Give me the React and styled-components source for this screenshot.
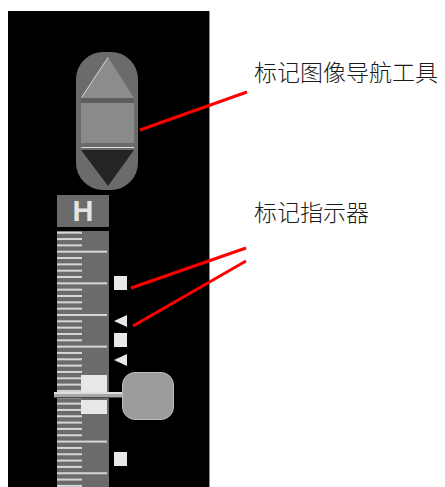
import React from 'react';
import styled, { createGlobalStyle } from 'styled-components';

const GlobalStyle = createGlobalStyle`
  html, body {
    margin: 0;
    padding: 0;
    background: #ffffff;
    overflow: hidden;
  }
`;

const TICK_STEP = 6.33;
const TICK_COUNT = 42;

const markers = [
  { kind: 'square', top: 45 },
  { kind: 'arrow', top: 84 },
  { kind: 'square', top: 102 },
  { kind: 'arrow', top: 123 },
  { kind: 'square', top: 221 },
];

function Ticks() {
  const ticks = [];
  for (let i = 0; i < TICK_COUNT; i++) {
    const long = i % 5 === 3;
    ticks.push(
      <rect key={i} x="0" y={0.7 + i * TICK_STEP} width={long ? 50 : 25} height="2" fill="#d6d6d6" />
    );
  }
  return (
    <svg width="52" height="270" viewBox="0 0 52 270">
      {ticks}
    </svg>
  );
}

function App() {
  return (
    <Page>
      <GlobalStyle />
      <Panel>
        <Navigator>
          <UpArrow width="53" height="41" viewBox="0 0 53 41">
            <polygon points="0,41 27,0 53,41" fill="#8c8c8c" />
            <line x1="0.5" y1="40.5" x2="27" y2="0.5" stroke="#d8d8d8" strokeWidth="1" />
          </UpArrow>
          <Divider />
          <CenterBox />
          <HighlightLine />
          <DownArrow width="53" height="36" viewBox="0 0 53 36">
            <polygon points="0,0 53,0 27,36" fill="#242424" />
          </DownArrow>
        </Navigator>

        <RulerHead>H</RulerHead>
        <Track>
          <Ruler>
            <Ticks />
            <Band $top={144} $height={18} />
            <Band $top={169} $height={14} />
          </Ruler>
          {markers.map((m, i) =>
            m.kind === 'square' ? (
              <SquareMark key={i} style={{ top: m.top }} />
            ) : (
              <ArrowMark key={i} style={{ top: m.top }} width="13" height="12" viewBox="0 0 13 12">
                <polygon points="0,6 13,0 13,12" fill="#e8e8e8" />
              </ArrowMark>
            )
          )}
          <Rod />
          <Thumb />
        </Track>
      </Panel>

      <Labels>
        <Label $gap={49}>标记图像导航工具</Label>
        <Label $gap={117}>标记指示器</Label>
      </Labels>

      <Callouts width="445" height="487" viewBox="0 0 445 487">
        <line x1="140" y1="130" x2="247" y2="92" />
        <line x1="131" y1="288" x2="246" y2="248" />
        <line x1="133" y1="326" x2="246" y2="261" />
      </Callouts>
    </Page>
  );
}

export default App;

const Page = styled.div`
  position: relative;
  display: flex;
  align-items: flex-start;
  width: 445px;
  height: 487px;
  padding-left: 8px;
  padding-top: 11px;
  box-sizing: border-box;
`;

const Panel = styled.div`
  display: flex;
  flex-direction: column;
  align-items: flex-start;
  width: 201px;
  height: 480px;
  background: #000000;
  border-right: 1px solid #8a8a8a;
  flex-shrink: 0;
`;

const Navigator = styled.div`
  display: flex;
  flex-direction: column;
  align-items: center;
  width: 62px;
  height: 140px;
  margin-top: 41px;
  margin-left: 68px;
  padding-top: 5px;
  box-sizing: border-box;
  border-radius: 27px;
  background: #6b6b6b;
`;

const UpArrow = styled.svg`
  display: block;
`;

const Divider = styled.div`
  width: 53px;
  height: 5px;
  background: #5e5e5e;
`;

const CenterBox = styled.div`
  width: 53px;
  height: 40px;
  background: #8a8a8a;
`;

const HighlightLine = styled.div`
  width: 53px;
  height: 1px;
  margin-top: 4px;
  margin-bottom: 2px;
  background: #dcdcdc;
`;

const DownArrow = styled.svg`
  display: block;
`;

const RulerHead = styled.div`
  display: flex;
  align-items: center;
  justify-content: center;
  width: 52px;
  height: 32px;
  margin-top: 5px;
  margin-left: 49px;
  background: #6b6b6b;
  color: #e4e4e4;
  font-family: 'Liberation Sans', Arial, sans-serif;
  font-weight: 700;
  font-size: 29px;
  line-height: 1;
`;

const Track = styled.div`
  position: relative;
  width: 130px;
  height: 260px;
  margin-top: 4px;
  margin-left: 49px;
`;

const Ruler = styled.div`
  position: relative;
  width: 52px;
  height: 260px;
  background: #6b6b6b;
  overflow: hidden;

  svg {
    display: block;
  }
`;

const Band = styled.div`
  position: absolute;
  left: 24px;
  width: 26px;
  top: ${(p) => p.$top}px;
  height: ${(p) => p.$height}px;
  background: #e8e8e8;
`;

const SquareMark = styled.div`
  position: absolute;
  left: 57px;
  width: 13px;
  height: 14px;
  background: #e8e8e8;
`;

const ArrowMark = styled.svg`
  position: absolute;
  left: 57px;
  display: block;
`;

const Rod = styled.div`
  position: absolute;
  left: -3px;
  top: 161px;
  width: 69px;
  height: 6px;
  box-sizing: border-box;
  background: #a8a8a8;
  border-top: 2px solid #dedede;
  border-bottom: 1px solid #4a4a4a;
`;

const Thumb = styled.div`
  position: absolute;
  left: 65px;
  top: 141px;
  width: 52px;
  height: 48px;
  box-sizing: border-box;
  border-radius: 13px;
  background: #9c9c9c;
  border: 1px solid #bdbdbd;
`;

const Labels = styled.div`
  position: relative;
  flex: 1;
  padding-left: 44px;
`;

const Label = styled.div`
  margin-top: ${(p) => p.$gap}px;
  font-family: 'Noto Sans CJK SC', 'Noto Sans', sans-serif;
  font-size: 23px;
  font-weight: 300;
  line-height: 23px;
  color: #1a1a1a;
  white-space: nowrap;
`;

const Callouts = styled.svg`
  position: absolute;
  left: 0;
  top: 0;
  pointer-events: none;

  line {
    stroke: #ff0000;
    stroke-width: 3;
  }
`;
